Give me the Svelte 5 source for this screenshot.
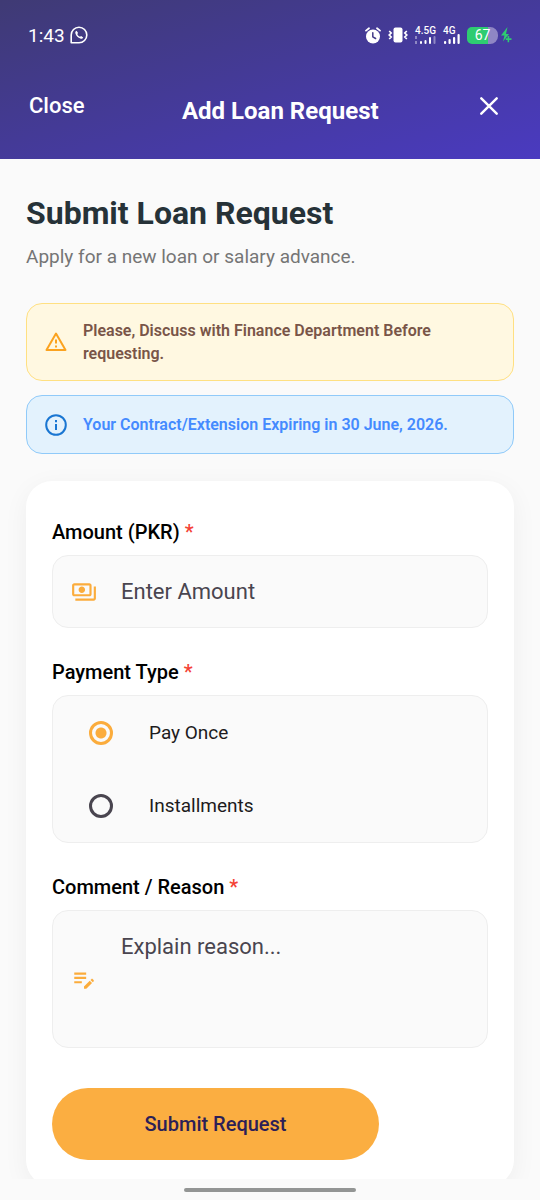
<script>
  let amount = $state('');
  let paymentType = $state('once');
  let comment = $state('');

  const paymentTypes = [
    { value: 'once', label: 'Pay Once' },
    { value: 'installments', label: 'Installments' }
  ];

  function submitRequest(event) {
    event.preventDefault();
  }
</script>

<div class="screen">
  <header>
    <div class="status">
      <div class="group">
        <span class="time">1:43</span>
        <svg width="18" height="18" viewBox="0 0 18 18" fill="none" stroke="#fff" aria-hidden="true">
          <path d="M1.200 16.800V9A7.800 7.800 0 1 1 9 16.800z" stroke-width="1.600" stroke-linejoin="round" />
          <path d="M6.500 4.800c-1.100.5-1.500 1.600-1 2.900.9 2.400 2.500 3.900 4.800 4.800 1.300.5 2.400.1 2.900-1l-2.100-1.500-1.100.8c-1.300-.5-2.200-1.500-2.700-2.800l.8-1.100z" fill="#fff" stroke="none" />
        </svg>
      </div>
      <div class="group right">
        <svg width="16" height="17" viewBox="0 0 16 17" aria-hidden="true">
          <circle cx="8" cy="9.500" r="7" fill="#fff" />
          <path d="M1 3.600L4 1.200M15 3.600L12 1.200" stroke="#fff" stroke-width="1.800" stroke-linecap="round" />
          <path d="M7.800 5.800v4l2.800 1.700" fill="none" stroke="#433b88" stroke-width="1.500" stroke-linecap="round" />
        </svg>
        <svg width="20" height="16" viewBox="0 0 20 16" fill="none" stroke="#fff" aria-hidden="true">
          <rect x="5.500" y="0.500" width="9" height="15" rx="2" fill="#fff" stroke="none" />
          <path d="M1.200 4l2 2-2 2 2 2-2 2M18.800 4l-2 2 2 2-2 2 2 2" stroke-width="1.700" />
        </svg>
        <div class="signal">
          <span>4.5G</span>
          <svg width="21" height="8" viewBox="0 0 21 8" fill="#fff" aria-hidden="true">
            <path d="M0 0h2v3H0zM0 5h2v3H0z" opacity=".4" />
            <rect x="5" y="5" width="2" height="3" rx="1" />
            <rect x="9.500" y="4" width="2" height="4" rx="1" />
            <rect x="14" y="1" width="2" height="7" rx="1" />
            <rect x="18.500" y="0" width="2" height="8" rx="1" opacity=".4" />
          </svg>
        </div>
        <div class="signal">
          <span>4G</span>
          <svg width="17" height="10" viewBox="0 0 17 10" fill="#fff" aria-hidden="true">
            <rect x="1" y="7" width="2.200" height="3" rx="1" />
            <rect x="5.500" y="5" width="2.200" height="5" rx="1" />
            <rect x="10" y="3" width="2.200" height="7" rx="1" />
            <rect x="14.500" y="0" width="2.200" height="10" rx="1" />
          </svg>
        </div>
        <div class="power">
          <span class="battery">67</span>
          <svg width="11" height="16" viewBox="0 0 11 16" fill="#2ecc71" aria-hidden="true">
            <path d="M6.500 0L0 8.500h3.500L2 14.500l6-7.500H5z" />
            <path d="M8.200 9v2.300h2.300v1.600H8.200v2.300H6.600v-2.300H4.800v-1.600h1.800V9z" />
          </svg>
        </div>
      </div>
    </div>
    <nav>
      <button type="button" class="close">Close</button>
      <h2>Add Loan Request</h2>
      <button type="button" class="dismiss" aria-label="Dismiss">
        <svg width="18" height="18" viewBox="0 0 18 18" fill="none" stroke="#fff" stroke-width="2.400" stroke-linecap="round">
          <path d="M1.300 1.300l15.400 15.400M16.700 1.300L1.300 16.700" />
        </svg>
      </button>
    </nav>
  </header>

  <main>
    <h1>Submit Loan Request</h1>
    <p class="subtitle">Apply for a new loan or salary advance.</p>

    <div class="notice warning">
      <svg width="22" height="22" viewBox="0 0 22 22" fill="none" stroke="#fba320" stroke-width="2" stroke-linejoin="round" aria-hidden="true">
        <path d="M11 2.500L20.500 19h-19z" />
        <path d="M11 8.500v4M11 14.600v2" />
      </svg>
      <p>Please, Discuss with Finance Department Before requesting.</p>
    </div>
    <div class="notice info">
      <svg width="22" height="22" viewBox="0 0 22 22" fill="none" stroke="#1976d2" stroke-width="2" aria-hidden="true">
        <circle cx="11" cy="11" r="9.800" />
        <path d="M11 10v6M11 6v2.200" />
      </svg>
      <p>Your Contract/Extension Expiring in 30 June, 2026.</p>
    </div>

    <form class="card" onsubmit={submitRequest}>
      <label class="title" for="amount">Amount (PKR) <span>*</span></label>
      <div class="box field">
        <svg width="26" height="26" viewBox="0 0 24 24" fill="#fbac3c" aria-hidden="true">
          <path d="M19 14V6c0-1.100-.9-2-2-2H3c-1.100 0-2 .9-2 2v8c0 1.100.9 2 2 2h14c1.100 0 2-.9 2-2zm-2 0H3V6h14v8zm-7-7c-1.660 0-3 1.340-3 3s1.340 3 3 3 3-1.340 3-3-1.340-3-3-3zm13 0v11c0 1.100-.9 2-2 2H4v-2h17V7h2z" />
        </svg>
        <input id="amount" type="text" inputmode="decimal" placeholder="Enter Amount" bind:value={amount} />
      </div>

      <fieldset>
        <legend class="title">Payment Type <span>*</span></legend>
        <div class="box">
          {#each paymentTypes as type}
            <label class="option">
              <input type="radio" name="paymentType" value={type.value} bind:group={paymentType} />
              {type.label}
            </label>
          {/each}
        </div>
      </fieldset>

      <label class="title" for="comment">Comment / Reason <span>*</span></label>
      <div class="box field">
        <svg width="26" height="26" viewBox="0 0 24 24" fill="#fbac3c" aria-hidden="true">
          <path d="M3 10h11v2H3v-2zm0-2h11V6H3v2zm0 8h7v-2H3v2zm15.010-3.130l.71-.71c.39-.39 1.020-.39 1.410 0l.71.71c.39.39.39 1.020 0 1.410l-.71.71-2.120-2.120zm-.71.71l-5.300 5.300V21h2.120l5.300-5.300-2.120-2.120z" />
        </svg>
        <textarea id="comment" rows="4" placeholder="Explain reason..." bind:value={comment}></textarea>
      </div>

      <button type="submit" class="submit">Submit Request</button>
    </form>
  </main>

  <footer><div class="handle"></div></footer>
</div>

<style>
  :global(body) {
    background: #fafafa;
  }

  .screen {
    display: flex;
    flex-direction: column;
    height: 100vh;
    background: #fafafa;
    font-family: Roboto, sans-serif;
  }

  h1, h2, p {
    margin: 0;
  }

  button {
    padding: 0;
    border: none;
    background: none;
    font-family: inherit;
    cursor: pointer;
  }

  header {
    flex: none;
    color: #fff;
    background: linear-gradient(to bottom right, #3f3a74, #4a3ac0);
  }

  .status {
    display: flex;
    align-items: center;
    justify-content: space-between;
    height: 70px;
    padding: 0 28px;
  }

  .group {
    display: flex;
    align-items: center;
    gap: 5px;
  }

  .right {
    gap: 7px;
  }

  .time {
    font-size: 19px;
  }

  .signal {
    display: flex;
    flex-direction: column;
    height: 17px;
    justify-content: space-between;
  }

  .signal span {
    font-size: 10px;
    line-height: 7px;
    font-weight: 500;
  }

  .power {
    display: flex;
    align-items: center;
    gap: 3px;
  }

  .battery {
    width: 31px;
    border-radius: 5px 8px 8px 5px;
    background: linear-gradient(to right, #2ecc71 67%, #8f86c4 67%);
    font-size: 14px;
    line-height: 17px;
    text-align: center;
  }

  nav {
    display: flex;
    align-items: center;
    justify-content: space-between;
    height: 89px;
    box-sizing: border-box;
    padding: 0 38px 18px 29px;
  }

  .close {
    color: #fff;
    font-size: 22px;
    font-weight: 500;
  }

  .dismiss {
    display: flex;
    padding: 4px;
  }

  h2 {
    padding-top: 10px;
    font-size: 24px;
    font-weight: 700;
  }

  main {
    flex: 1;
    min-height: 0;
    overflow: hidden;
    padding: 34px 26px 0;
  }

  h1 {
    color: #263238;
    font-size: 32px;
    line-height: 40px;
    font-weight: 700;
  }

  .subtitle {
    margin: 12px 0 34px;
    color: #757575;
    font-size: 19px;
    line-height: 24px;
  }

  .notice {
    display: flex;
    align-items: center;
    gap: 16px;
    margin-bottom: 14px;
    padding: 15px 18px;
    border: 1px solid;
    border-radius: 16px;
    font-size: 16px;
    line-height: 23px;
    font-weight: 600;
  }

  .notice svg {
    flex: none;
  }

  .warning {
    border-color: #ffe082;
    background: #fff8e1;
    color: #795548;
  }

  .info {
    padding: 17px 18px;
    border-color: #90caf9;
    background: #e3f2fd;
    color: #448aff;
  }

  .card {
    margin-top: 27px;
    padding: 38px 26px 26px;
    border-radius: 26px;
    background: #fff;
    box-shadow: 0 6px 26px rgba(0, 0, 0, 0.05);
  }

  .title {
    display: block;
    margin-bottom: 10px;
    padding: 0;
    color: #000;
    font-size: 20px;
    line-height: 26px;
    font-weight: 500;
  }

  .title span {
    color: #f44336;
  }

  .box {
    margin-bottom: 31px;
    border: 1px solid #eee;
    border-radius: 16px;
    background: #fafafa;
  }

  .field {
    display: flex;
    align-items: center;
    padding: 0 18px;
    gap: 24px;
  }

  .field svg {
    flex: none;
  }

  .field input,
  .field textarea {
    flex: 1;
    min-width: 0;
    margin: 0;
    padding: 22px 0;
    border: none;
    outline: none;
    background: none;
    resize: none;
    color: #1d1b20;
    font-family: inherit;
    font-size: 22px;
    line-height: 27px;
  }

  .field textarea {
    padding: 22px 0 6px;
  }

  .field ::placeholder {
    color: #49454f;
    opacity: 1;
  }

  fieldset {
    margin: 0;
    padding: 0;
    border: none;
  }

  .option {
    display: flex;
    align-items: center;
    gap: 36px;
    height: 73px;
    padding-left: 36px;
    color: #1d1b20;
    font-size: 19px;
  }

  .option input {
    appearance: none;
    width: 24px;
    height: 24px;
    margin: 0;
    border: 3px solid #49454f;
    border-radius: 50%;
  }

  .option input:checked {
    border-color: #fbac3c;
    background: radial-gradient(circle, #fbac3c 5px, transparent 6px);
  }

  .submit {
    display: block;
    width: 75%;
    height: 72px;
    margin-top: 40px;
    border-radius: 36px;
    background: #fbae41;
    color: #2c1f57;
    font-size: 20px;
    font-weight: 500;
  }

  footer {
    flex: none;
    display: flex;
    justify-content: center;
    padding: 9px 0 8px;
    background: #fafafa;
  }

  .handle {
    width: 32%;
    height: 4px;
    border-radius: 2px;
    background: #939594;
  }
</style>
